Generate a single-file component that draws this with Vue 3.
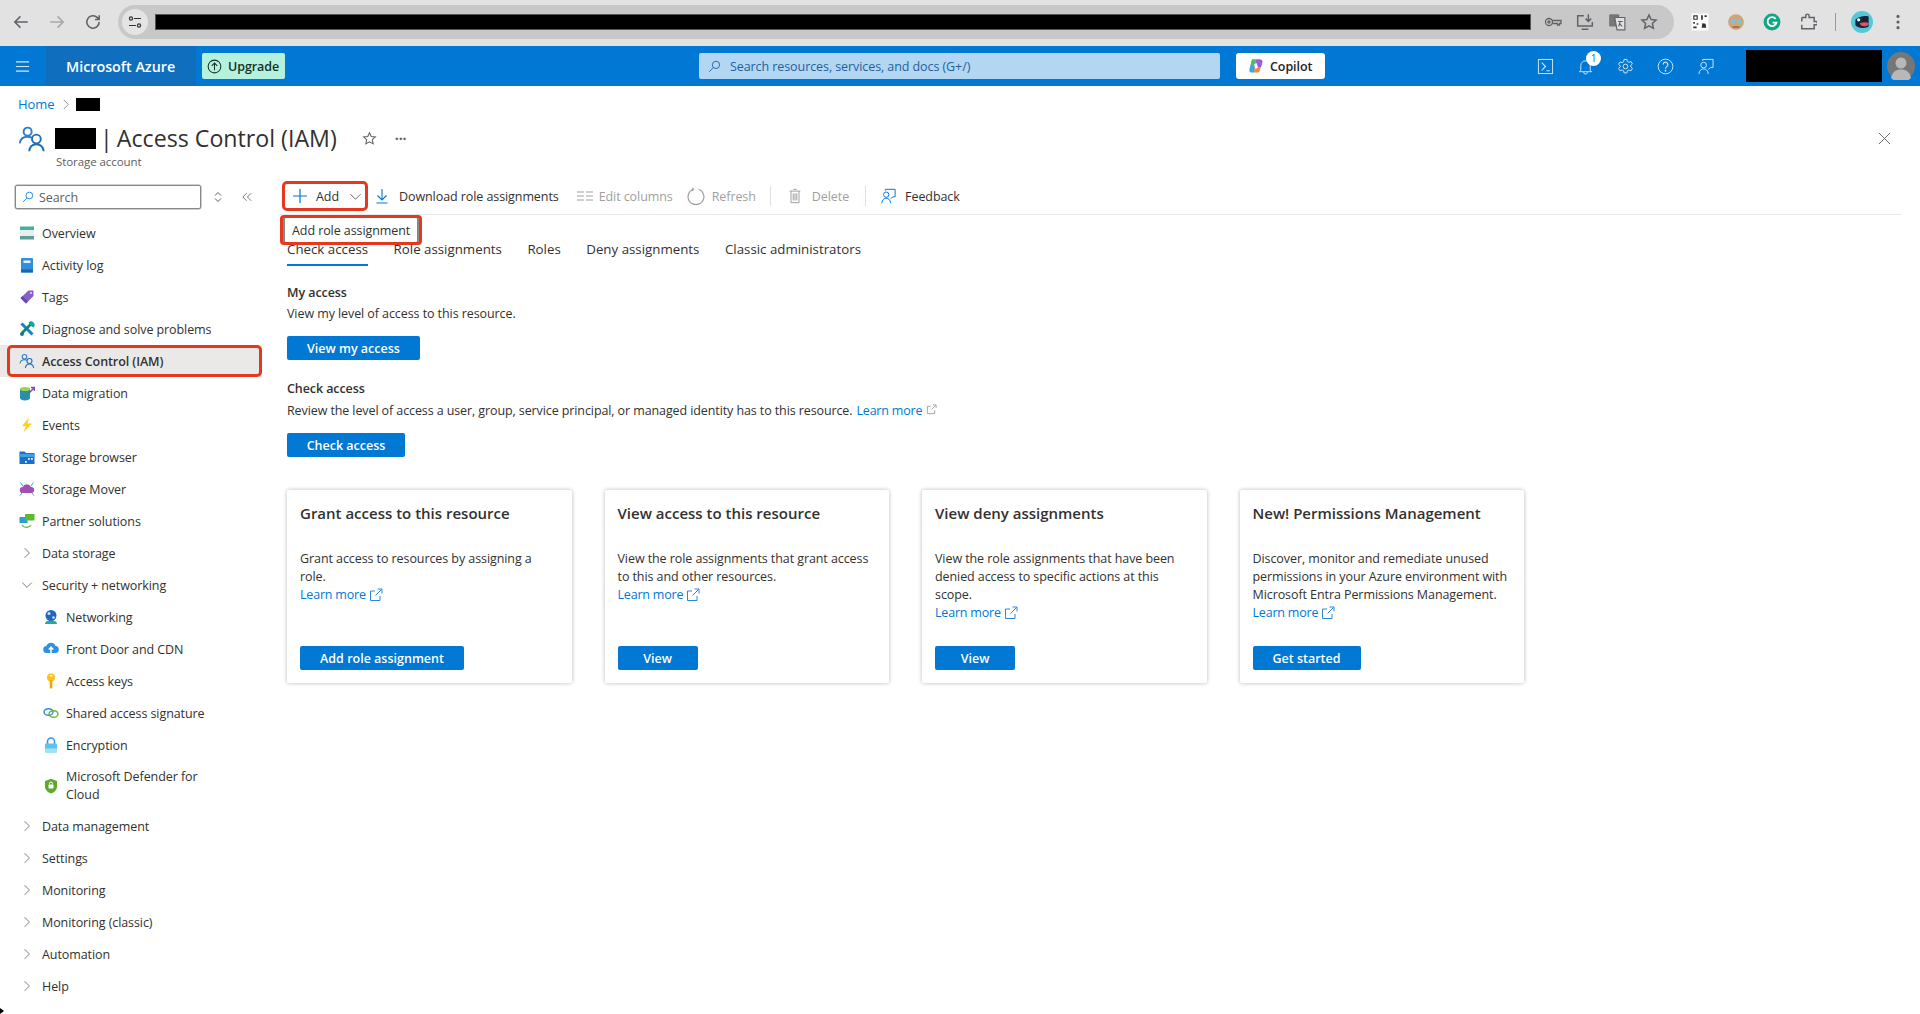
<script setup>
// Colour icons of the resource menu, all drawn on a 16x16 box
const icons = {
  overview: '<rect x="1" y="1.5" width="14" height="3.5" fill="#3fb29a"/><rect x="1" y="5" width="14" height="6" fill="#e6eeee"/><rect x="1" y="11" width="14" height="3.5" fill="#5e9e98"/>',
  log: '<rect x="2" y="1" width="12" height="14.5" rx="1" fill="#2f8fe0"/><rect x="2" y="12.5" width="12" height="3" fill="#1b66ad"/><rect x="4.5" y="3.5" width="7" height="2.5" fill="#e8f3fc"/>',
  tags: '<path d="M9.5 1.5h5v5.500L7 14.500 1.500 9z" fill="#8661c5"/><path d="M7 14.500 1.500 9l2-2L9 12.500z" fill="#6b45ad"/><circle cx="12" cy="4" r="1" fill="#e6dcf5"/>',
  diagnose: '<path d="M2.500 2.500 13.500 13.500" stroke="#1583c7" stroke-width="3"/><path d="M13 2 3 12" stroke="#0f7f7f" stroke-width="2.600"/><path d="M9.500 1.500a3.500 3.500 0 0 1 5 5L12 5z" fill="#12a5a5"/><circle cx="3" cy="13" r="2" fill="#0f7f7f"/>',
  iam: '<g fill="none" stroke="#2f7fc9" stroke-width="1.100"><circle cx="5.500" cy="3.800" r="2.300"/><path d="M1 10.500c.3-2.400 1.800-3.800 4.500-3.800 1 0 1.700.2 2.400.6"/></g><g fill="none" stroke="#1f6fb8" stroke-width="1.100"><circle cx="10.500" cy="8" r="2.500"/><path d="M6.400 15c.3-2.500 1.800-4 4.100-4s3.800 1.500 4.200 4"/></g>',
  migrate: '<path d="M1 4h10v9c0 1.500-2.200 2.500-5 2.500S1 14.500 1 13z" fill="#2a8fa8"/><ellipse cx="6" cy="4" rx="5" ry="2" fill="#9bd44a"/><path d="M10 8 15 3M12 2.500h3.500V6" stroke="#7a4fb5" stroke-width="1.500" fill="none"/>',
  events: '<path d="M10 .5 3 9h4l-2.500 6.500L13 6.500H8.500z" fill="#fcd116"/>',
  browser: '<path d="M.5 2.500h5l1.500 1.500h8.500v11H.500z" fill="#1a6fc9"/><rect x=".5" y="5" width="15" height="3" fill="#3fa0ea"/><g fill="#e8f3fc"><rect x="9" y="9" width="1.800" height="1.800"/><rect x="12" y="9" width="1.800" height="1.800"/><rect x="6" y="12" width="1.800" height="1.800"/></g>',
  mover: '<path d="M4 12a3 3 0 0 1-.3-6A4.500 4.500 0 0 1 12 6a3 3 0 0 1 .3 6z" fill="#a14fb5"/><path d="M1.500 1.500 4 5M14.500 1.500 12 5M3 12l-2 2.500M13 12l2 2.500" stroke="#27b0c9" stroke-width="1"/>',
  partner: '<rect x=".5" y="4" width="8" height="6" fill="#2aa0d8"/><rect x="6" y="1" width="9.500" height="6.500" fill="#5fb832"/><path d="M3 12a5.500 5.500 0 0 0 9 0" stroke="#5fb832" stroke-width="1.200" fill="none"/>',
  network: '<path d="M2 15c0-2.500 2.500-3.500 6-3.500s6 1 6 3.500z" fill="#1fae9b"/><circle cx="8" cy="6.500" r="5.500" fill="#2166c0"/><circle cx="6" cy="4.500" r="1.500" fill="#cfe3f7"/><circle cx="10.500" cy="8.500" r="1.300" fill="#cfe3f7"/>',
  frontdoor: '<path d="M4 12a3.500 3.500 0 0 1-.5-7A4.800 4.800 0 0 1 12.500 5 3.500 3.500 0 0 1 12 12z" fill="#2f8fe0"/><path d="M8 15V6.500M5.800 8.500 8 6.200l2.200 2.300" stroke="#fff" stroke-width="1.500" fill="none"/>',
  key: '<circle cx="8" cy="4.500" r="4" fill="#fcc419"/><rect x="6.700" y="7" width="2.600" height="8.500" rx="1" fill="#f0a808"/><rect x="6.800" y="2" width="2.400" height="1.500" fill="#fff3c4"/>',
  sas: '<ellipse cx="5.500" cy="7" rx="4.500" ry="3.300" fill="none" stroke="#2f8fe0" stroke-width="1.400"/><ellipse cx="10.500" cy="9" rx="4.500" ry="3.300" fill="none" stroke="#6cb33f" stroke-width="1.400"/>',
  encrypt: '<path d="M4.500 7V4.500a3.500 3.500 0 0 1 7 0V7" fill="none" stroke="#2f9be8" stroke-width="1.600"/><rect x="2" y="6.500" width="12" height="9" rx="1" fill="#5cc3ee"/><rect x="2" y="11.500" width="12" height="4" fill="#9be3f5"/>',
  defender: '<path d="M8 .8 14 3v5.500c0 3.500-2.800 5.800-6 7-3.200-1.200-6-3.500-6-7V3z" fill="#5ea82e"/><rect x="5.500" y="6.500" width="5" height="4" rx=".8" fill="#fff"/><path d="M6.500 6.500V5.500a1.500 1.500 0 0 1 3 0v1" stroke="#fff" fill="none"/>'
}

const menu = [
  { label: 'Overview', icon: 'overview' },
  { label: 'Activity log', icon: 'log' },
  { label: 'Tags', icon: 'tags' },
  { label: 'Diagnose and solve problems', icon: 'diagnose' },
  { label: 'Access Control (IAM)', icon: 'iam', selected: true },
  { label: 'Data migration', icon: 'migrate' },
  { label: 'Events', icon: 'events' },
  { label: 'Storage browser', icon: 'browser' },
  { label: 'Storage Mover', icon: 'mover' },
  { label: 'Partner solutions', icon: 'partner' },
  { label: 'Data storage', group: 'closed' },
  { label: 'Security + networking', group: 'open' },
  { label: 'Networking', icon: 'network', sub: true },
  { label: 'Front Door and CDN', icon: 'frontdoor', sub: true },
  { label: 'Access keys', icon: 'key', sub: true },
  { label: 'Shared access signature', icon: 'sas', sub: true },
  { label: 'Encryption', icon: 'encrypt', sub: true },
  { label: 'Microsoft Defender for Cloud', icon: 'defender', sub: true, tall: true },
  { label: 'Data management', group: 'closed' },
  { label: 'Settings', group: 'closed' },
  { label: 'Monitoring', group: 'closed' },
  { label: 'Monitoring (classic)', group: 'closed' },
  { label: 'Automation', group: 'closed' },
  { label: 'Help', group: 'closed' }
]

const tabs = ['Check access', 'Role assignments', 'Roles', 'Deny assignments', 'Classic administrators']

const cards = [
  { title: 'Grant access to this resource', text: 'Grant access to resources by assigning a role.', action: 'Add role assignment', cls: 'btn-add' },
  { title: 'View access to this resource', text: 'View the role assignments that grant access to this and other resources.', action: 'View', cls: 'btn-view' },
  { title: 'View deny assignments', text: 'View the role assignments that have been denied access to specific actions at this scope.', action: 'View', cls: 'btn-view' },
  { title: 'New! Permissions Management', text: 'Discover, monitor and remediate unused permissions in your Azure environment with Microsoft Entra Permissions Management.', action: 'Get started', cls: 'btn-start' }
]
</script>

<template>
  <div class="page">
    <!-- Browser chrome -->
    <div class="chrome">
      <div class="nav-btns">
        <svg class="ci" viewBox="0 0 16 16" fill="none" stroke="#5f6368" stroke-width="1.400"><path d="M14 8H2.500M7.500 3 2.500 8l5 5"/></svg>
        <svg class="ci" viewBox="0 0 16 16" fill="none" stroke="#a8a8a8" stroke-width="1.400"><path d="M2 8h11.500M8.500 3l5 5-5 5"/></svg>
        <svg class="ci" viewBox="0 0 16 16" fill="none" stroke="#5f6368" stroke-width="1.400"><path d="M13.500 8a5.500 5.500 0 1 1-1.600-3.900L13.500 5.700M13.500 2v3.700H9.800"/></svg>
      </div>
      <div class="url-pill">
        <span class="tune">
          <svg viewBox="0 0 16 16" fill="none" stroke="#333" stroke-width="1.200"><circle cx="4" cy="4.500" r="1.600"/><path d="M7 4.500h7M2 11.500h7"/><circle cx="12" cy="11.500" r="1.600"/></svg>
        </span>
        <span class="url-mask"></span>
        <div class="url-icons">
          <svg class="ci" viewBox="0 0 18 16" fill="none" stroke="#5f6368" stroke-width="1.300"><circle cx="5" cy="8" r="3.500"/><circle cx="5" cy="8" r="1"/><path d="M8.500 6.500h8.500v3h-1.500v1.500h-2V9.500h-5"/></svg>
          <svg class="ci" viewBox="0 0 16 16" fill="none" stroke="#5f6368" stroke-width="1.300"><path d="M7 2.500H1.500v9h13V8M5 14.500h6M11 1v6.500M8.500 5 11 7.500 13.500 5"/></svg>
          <svg class="ci" viewBox="0 0 16 16"><rect x="1" y="1" width="9" height="11" rx="1" fill="#777"/><path d="M6 4h9v11H8z" fill="#e0e0e0" stroke="#5f6368"/><path d="M9 7.500h4M11 7l-1.500 5M10 9l2.500 3" stroke="#5f6368" fill="none"/></svg>
          <svg class="ci" viewBox="0 0 16 16" fill="none" stroke="#5f6368" stroke-width="1.300"><path d="m8 1.800 1.900 4 4.400.5-3.300 3 .9 4.400L8 11.500l-3.900 2.200.9-4.400-3.300-3 4.400-.5z"/></svg>
        </div>
      </div>
      <div class="ext-icons">
        <svg class="ci" viewBox="0 0 16 16"><rect width="15" height="15" x=".5" y=".5" fill="#fff"/><path d="M2 2h4v4H2zM3 3v2h2V3zM9 2h1.500v4H9zM12 2h2v1.500h-2zM2 8h1.500v1.500H2zM5 9h1.500v1.500H5zM2 12h3v1.500H2zM10 9l3 .5.500 3.500h-4z" fill="#333" fill-rule="evenodd"/></svg>
        <svg class="ci" viewBox="0 0 16 16"><circle cx="8" cy="8" r="7" fill="#d0a47c"/><circle cx="5.300" cy="7.500" r="2.200" fill="#7fc4c9"/><circle cx="10.700" cy="7.500" r="2.200" fill="#7fc4c9"/><path d="M5 12.500h6" stroke="#8a5a35"/></svg>
        <svg class="ci" viewBox="0 0 16 16"><circle cx="8" cy="8" r="7.500" fill="#11a683"/><path d="M11.300 5.200a4 4 0 1 0 .7 3.300H8.500" fill="none" stroke="#fff" stroke-width="1.600"/></svg>
        <svg class="ci" viewBox="0 0 16 16" fill="none" stroke="#5f6368" stroke-width="1.300"><path d="M2.500 4H6V2.500a1.500 1.500 0 0 1 3 0V4h4.500v3.500H15a1.500 1.500 0 0 1 0 3h-1.500V14h-11v-3.500M2.500 7.500V4"/></svg>
        <span class="ext-sep"></span>
        <svg class="ci ext-me" viewBox="0 0 20 20"><circle cx="10" cy="10" r="10" fill="#53c8d8"/><path d="M4 8c3-3 8-4 12-3v9c-4 2-9 2-12-1z" fill="#16213a"/><path d="M8 11c3-1 6-1 8 0 0 2-1 3-4 3-2 0-4-1-4-3z" fill="#e8505b"/><circle cx="7" cy="8" r="1.500" fill="#fff"/></svg>
        <svg class="ci ext-dots" viewBox="0 0 16 16" fill="#5f6368"><circle cx="8" cy="3" r="1.400"/><circle cx="8" cy="8" r="1.400"/><circle cx="8" cy="13" r="1.400"/></svg>
      </div>
    </div>

    <!-- Azure top bar -->
    <header class="topbar">
      <div class="burger">
        <svg viewBox="0 0 16 16" stroke="#d5e8f8" stroke-width="1.300"><path d="M1 3h14M1 8h14M1 13h14"/></svg>
      </div>
      <div class="brand">Microsoft Azure</div>
      <div class="upgrade">
        <svg viewBox="0 0 16 16" fill="none" stroke="#12302a" stroke-width="1.100"><circle cx="8" cy="8" r="6.800"/><path d="M8 12V4.500M5 7.300 8 4.300l3 3"/></svg>
        <span>Upgrade</span>
      </div>
      <div class="global-search">
        <svg viewBox="0 0 16 16" fill="none" stroke="#1f5f9f" stroke-width="1.100"><circle cx="9.800" cy="6" r="4.500"/><path d="M6.500 9.300 1.500 14.500"/></svg>
        <span>Search resources, services, and docs (G+/)</span>
      </div>
      <div class="copilot">
        <svg viewBox="0 0 16 16">
          <path d="M4 1.500h5L6 14.500H3.500C1.500 14.500 1 13 1.500 11z" fill="#3aa6e8"/>
          <path d="M4 1.500h5L7.500 8 2.500 8z" fill="#4fb96f"/>
          <path d="M7.500 1.500H12c2 0 2.800 1.500 2.200 3.500l-2.500 8c-.4 1-1.200 1.500-2.200 1.500H6z" fill="#f28a3c"/>
          <path d="M8.200 1.500H12c2 0 2.800 1.500 2.200 3.500L13 9H8z" fill="#9c5ce0"/>
          <path d="M6 6.500 8.500 5 10 9.500 7.500 11z" fill="#fff"/>
        </svg>
        <span>Copilot</span>
      </div>
      <div class="top-icons">
        <span class="top-icon">
          <svg viewBox="0 0 18 18" fill="none" stroke="#d5e8f8" stroke-width="1"><rect x="1.500" y="1.500" width="15" height="15"/><path d="m5 5 4 4-4 4M10 13.500h3.500" stroke-width="1.200"/></svg>
        </span>
        <span class="top-icon bell">
          <svg viewBox="0 0 18 18" fill="none" stroke="#d5e8f8" stroke-width="1"><path d="M4 13V8a5 5 0 0 1 10 0v5l1.500 1.500h-13zM7 15a2 2 0 0 0 4 0"/></svg>
          <i class="badge">1</i>
        </span>
        <span class="top-icon">
          <svg viewBox="0 0 18 18" fill="none" stroke="#d5e8f8" stroke-width="1"><circle cx="9" cy="9" r="2.500"/><path d="M7.500 1.500h3l.5 2.300 1.600.8 2.200-.9 1.500 2.600-1.700 1.500v1.700l1.700 1.500-1.500 2.600-2.200-.9-1.600.8-.5 2.300h-3L7 13.500l-1.600-.8-2.200.9-1.500-2.600 1.700-1.500V8.200L1.700 6.700l1.500-2.600 2.200.9L7 4.100z"/></svg>
        </span>
        <span class="top-icon">
          <svg viewBox="0 0 18 18" fill="none" stroke="#d5e8f8" stroke-width="1"><circle cx="9" cy="9" r="7.800"/><path d="M6.500 7a2.500 2.500 0 1 1 3.800 2.100C9.300 9.800 9 10.300 9 11.500" stroke-width="1.200"/><circle cx="9" cy="13.500" r=".6" fill="#d5e8f8"/></svg>
        </span>
        <span class="top-icon">
          <svg viewBox="0 0 18 18" fill="none" stroke="#d5e8f8" stroke-width="1"><circle cx="7" cy="7.500" r="3"/><path d="M2 17c.4-3.500 2.300-5.500 5-5.500s4.600 2 5 5.500M6 3V1.500h11V10h-2.500l-2.500 2"/></svg>
        </span>
      </div>
      <div class="account-mask"></div>
      <div class="avatar">
        <svg viewBox="0 0 28 28"><circle cx="14" cy="14" r="14" fill="#767676"/><circle cx="14" cy="11" r="5.500" fill="#b8b8b8"/><path d="M4 26c1-6 5-8.500 10-8.500S23 20 24 26a14 14 0 0 1-20 0z" fill="#b8b8b8"/></svg>
      </div>
    </header>

    <!-- Breadcrumb and blade title -->
    <div class="crumbs">
      <a class="home">Home</a>
      <svg viewBox="0 0 8 12" fill="none" stroke="#8a8886"><path d="M1.500 1 6.500 6l-5 5"/></svg>
      <span class="crumb-mask"></span>
    </div>
    <div class="blade-head">
      <svg class="blade-icon" viewBox="0 0 16 16" v-html="icons.iam"></svg>
      <div class="blade-titles">
        <div class="blade-title">
          <span class="title-mask"></span>
          <h1><span class="pipe">|</span>Access Control (IAM)</h1>
          <svg class="star" viewBox="0 0 16 16" fill="none" stroke="#605e5c" stroke-width="1.100"><path d="m8 1.800 1.900 4 4.400.5-3.300 3 .9 4.400L8 11.500l-3.900 2.200.9-4.400-3.300-3 4.400-.5z"/></svg>
          <span class="more">···</span>
        </div>
        <div class="blade-sub">Storage account</div>
      </div>
      <svg class="close" viewBox="0 0 14 14" stroke="#605e5c" stroke-width="1"><path d="m1 1 12 12M13 1 1 13"/></svg>
    </div>

    <div class="body">
      <!-- Resource menu -->
      <aside class="side">
        <div class="side-tools">
          <div class="side-search">
            <svg viewBox="0 0 16 16" fill="none" stroke="#0078d4" stroke-width="1.100"><circle cx="9.800" cy="6" r="4.500"/><path d="M6.500 9.300 1.500 14.500"/></svg>
            <span>Search</span>
          </div>
          <svg class="updown" viewBox="0 0 10 14" fill="none" stroke="#605e5c"><path d="M2 5.500 5 2.500l3 3M2 8.500l3 3 3-3"/></svg>
          <svg class="collapse" viewBox="0 0 14 12" fill="none" stroke="#605e5c"><path d="M6.500 1.500 2 6l4.500 4.500M12 1.500 7.500 6l4.500 4.500"/></svg>
        </div>
        <nav>
          <div
            v-for="item in menu"
            :key="item.label"
            class="nav-item"
            :class="{ selected: item.selected, sub: item.sub, tall: item.tall }"
          >
            <svg v-if="item.group === 'closed'" class="nav-chev" viewBox="0 0 16 16" fill="none" stroke="#605e5c"><path d="m5 2 6 6-6 6"/></svg>
            <svg v-else-if="item.group === 'open'" class="nav-chev" viewBox="0 0 16 16" fill="none" stroke="#605e5c"><path d="m2 5 6 6 6-6"/></svg>
            <svg v-else class="nav-icon" viewBox="0 0 16 16" v-html="icons[item.icon]"></svg>
            <span>{{ item.label }}</span>
          </div>
        </nav>
      </aside>

      <!-- IAM blade content -->
      <main class="main">
        <div class="toolbar">
          <div class="tool add-tool">
            <svg class="tool-plus" viewBox="0 0 16 16" stroke="#0078d4" stroke-width="1.200"><path d="M8 1v14M1 8h14"/></svg>
            <span>Add</span>
            <svg class="tool-chev" viewBox="0 0 14 14" fill="none" stroke="#605e5c"><path d="m1.500 4.500 5.500 5.500 5.500-5.500"/></svg>
          </div>
          <div class="tool t-download">
            <svg viewBox="0 0 16 16" fill="none" stroke="#0078d4" stroke-width="1.100"><path d="M8 1v10.500M3.500 7.500 8 12l4.500-4.500M2.500 15h11"/></svg>
            <span>Download role assignments</span>
          </div>
          <div class="tool off t-columns">
            <svg viewBox="0 0 18 16" fill="none" stroke="#a19f9d"><path d="M1 4h7M1 8h7M1 12h7M10 4h7M10 8h7M10 12h7"/></svg>
            <span>Edit columns</span>
          </div>
          <div class="tool off t-refresh">
            <svg viewBox="0 0 18 18" fill="none" stroke="#a19f9d" stroke-width="1.100"><path d="M6 2.200a7.500 7.500 0 1 0 5 0M5 .8 6.200 2.500 4.300 3.700"/></svg>
            <span>Refresh</span>
          </div>
          <i class="tool-sep sep-first"></i>
          <div class="tool off t-delete">
            <svg viewBox="0 0 16 18" fill="none" stroke="#a19f9d" stroke-width="1.100"><path d="M2 3.500h12M3.500 3.500V16.500h9V3.500M6 1.500h4M6 6v8M8 6v8M10 6v8"/></svg>
            <span>Delete</span>
          </div>
          <i class="tool-sep"></i>
          <div class="tool t-feedback">
            <svg viewBox="0 0 18 18" fill="none" stroke="#0078d4" stroke-width="1.100"><circle cx="7" cy="7.500" r="3"/><path d="M2 17c.4-3.500 2.300-5.500 5-5.500s4.600 2 5 5.500M6 3V1.500h11V10h-2.500l-2.500 2"/></svg>
            <span>Feedback</span>
          </div>
        </div>

        <div class="add-menu">Add role assignment</div>

        <div class="tabs">
          <div v-for="(tab, i) in tabs" :key="tab" class="tab" :class="{ active: i === 0 }">{{ tab }}</div>
        </div>

        <section class="access">
          <h2>My access</h2>
          <p>View my level of access to this resource.</p>
          <button class="primary btn-my">View my access</button>

          <h2 class="second">Check access</h2>
          <p class="second-text">
            Review the level of access a user, group, service principal, or managed identity has to this resource.
            <a class="link">Learn more</a>
            <svg class="ext-small" viewBox="0 0 12 12" fill="none" stroke="#a19f9d"><path d="M5 2.500H1.500v8h8V7M6 6l4.500-4.500M7.500 1h3.500v3.500"/></svg>
          </p>
          <button class="primary btn-check">Check access</button>
        </section>

        <section class="cards">
          <article v-for="card in cards" :key="card.title" class="card">
            <h3>{{ card.title }}</h3>
            <p>
              {{ card.text }}<br />
              <a class="link">Learn more</a>
              <svg class="ext-link" viewBox="0 0 14 14" fill="none" stroke="#2b88d8"><path d="M6 3H1.500v9.500H11V8M6.500 7.500 12.500 1.500M8.500 1H13v4.500"/></svg>
            </p>
            <button class="primary" :class="card.cls">{{ card.action }}</button>
          </article>
        </section>
      </main>
    </div>

    <!-- Tip of the mouse pointer at the bottom left -->
    <i class="pointer"></i>
  </div>
</template>

<style>
html, body {
  margin: 0;
  background: #fff;
  overflow: hidden;
}
</style>

<style scoped>
.page {
  position: relative;
  width: 1920px;
  height: 1014px;
  overflow: hidden;
  font-family: "Open Sans", "Noto Sans", sans-serif;
  font-size: 12.5px;
  letter-spacing: -.08px;
  color: #323130;
}

.pointer {
  position: absolute;
  left: 0;
  bottom: 0;
  border-left: 4px solid #000;
  border-top: 3px solid transparent;
  border-bottom: 3px solid transparent;
}

svg {
  display: block;
  flex: none;
}

/* Browser chrome */
.chrome {
  display: flex;
  align-items: center;
  height: 46px;
  padding: 0 0 2px 8px;
  box-sizing: border-box;
  background: #e2e2e2;
}

.nav-btns {
  display: flex;
  gap: 18px;
  padding: 0 4px;
  width: 102px;
  box-sizing: border-box;
}

.ci {
  width: 18px;
  height: 18px;
}

.url-pill {
  display: flex;
  align-items: center;
  width: 1556px;
  height: 34px;
  margin-left: 8px;
  border-radius: 17px;
  background: #c8c8c8;
}

.tune {
  display: flex;
  align-items: center;
  justify-content: center;
  width: 26px;
  height: 26px;
  margin-left: 4px;
  border-radius: 50%;
  background: #e4e4e4;
}

.tune svg {
  width: 16px;
  height: 16px;
}

.url-mask {
  width: 1376px;
  height: 16px;
  margin-left: 7px;
  background: #000;
  border: 1px solid #555;
  box-sizing: border-box;
}

.url-icons {
  display: flex;
  gap: 14px;
  margin-left: 13px;
}

.ext-icons {
  display: flex;
  align-items: center;
  gap: 18px;
  margin-left: 17px;
}

.ext-sep {
  width: 1px;
  height: 18px;
  margin: 0 -2px 0 0;
  background: #9a9a9a;
}

.ext-me {
  width: 22px;
  height: 22px;
  margin-left: -1px;
}

.ext-dots {
  margin-left: -2px;
}

/* Azure top bar */
.topbar {
  display: flex;
  align-items: center;
  height: 40px;
  background: #0078d4;
  color: #fff;
}

.burger {
  display: flex;
  justify-content: center;
  width: 46px;
  padding-right: 2px;
  box-sizing: border-box;
}

.burger svg {
  width: 15px;
  height: 15px;
}

.brand {
  display: flex;
  align-items: center;
  width: 150px;
  height: 40px;
  padding-left: 20px;
  box-sizing: border-box;
  background: #106ebe;
  font-size: 14.300px;
  font-weight: 600;
  letter-spacing: 0;
}

.upgrade {
  display: flex;
  align-items: center;
  gap: 6px;
  width: 83px;
  height: 26px;
  margin-left: 6px;
  padding-left: 5px;
  box-sizing: border-box;
  border-radius: 2px;
  background: #b5f2dd;
  color: #12302a;
  font-weight: 600;
}

.upgrade svg {
  width: 15px;
  height: 15px;
}

.global-search {
  display: flex;
  align-items: center;
  gap: 9px;
  width: 521px;
  height: 26px;
  margin-left: 414px;
  padding-left: 9px;
  box-sizing: border-box;
  border-radius: 2px;
  background: #b3d6f2;
  color: #1f5f9f;
}

.global-search svg {
  width: 13px;
  height: 13px;
}

.copilot {
  display: flex;
  align-items: center;
  gap: 6px;
  width: 89px;
  height: 26px;
  margin-left: 16px;
  padding-left: 12px;
  box-sizing: border-box;
  border-radius: 3px;
  background: #fff;
  color: #242424;
  font-weight: 600;
}

.copilot svg {
  width: 16px;
  height: 16px;
}

.top-icons {
  display: flex;
  margin-left: 200px;
}

.top-icon {
  display: flex;
  align-items: center;
  justify-content: center;
  position: relative;
  width: 40px;
  height: 40px;
}

.top-icon svg {
  width: 17px;
  height: 17px;
}

.badge {
  position: absolute;
  top: 5px;
  left: 21px;
  width: 15px;
  height: 15px;
  border-radius: 50%;
  background: #fff;
  color: #0078d4;
  font-size: 10px;
  font-style: normal;
  line-height: 15px;
  text-align: center;
}

.account-mask {
  width: 136px;
  height: 32px;
  margin-left: 21px;
  background: #000;
}

.avatar {
  width: 28px;
  height: 28px;
  margin-left: 5px;
}

/* Breadcrumb and blade title */
.crumbs {
  display: flex;
  align-items: center;
  gap: 8px;
  height: 20px;
  margin-top: 8px;
  padding-left: 18px;
  font-size: 13px;
}

.crumbs svg {
  width: 8px;
  height: 11px;
}

.home {
  color: #0078d4;
}

.link {
  color: #0078d4;
  letter-spacing: -.2px;
}

.crumb-mask {
  width: 24px;
  height: 13px;
  margin-left: -2px;
  background: #000;
}

.blade-head {
  display: flex;
  margin-top: 8px;
  padding: 0 29px 0 18px;
}

.blade-icon {
  width: 28px;
  height: 28px;
  margin-top: 3px;
}

.blade-titles {
  flex: 1;
  margin-left: 9px;
}

.blade-title {
  display: flex;
  align-items: center;
  height: 32px;
}

.title-mask {
  width: 41px;
  height: 21px;
  background: #000;
}

h1 {
  margin: 0 0 0 4px;
  font-size: 23.200px;
  font-weight: 400;
  letter-spacing: 0;
}

.pipe {
  margin-right: 4px;
}

.star {
  width: 15px;
  height: 15px;
  margin-left: 25px;
}

.more {
  margin-left: 18px;
  color: #605e5c;
  font-size: 14px;
  font-weight: 700;
}

.blade-sub {
  height: 16px;
  margin-left: 1px;
  color: #605e5c;
  font-size: 11.500px;
  line-height: 16px;
}

.close {
  width: 13px;
  height: 13px;
  margin-top: 10px;
}

.body {
  display: flex;
  margin-top: 6px;
}

/* Resource menu */
.side {
  width: 280px;
  flex: none;
}

.side-tools {
  display: flex;
  align-items: center;
  padding: 9px 0 8px 15px;
}

.side-search {
  display: flex;
  align-items: center;
  gap: 5px;
  width: 186px;
  height: 24px;
  padding-left: 6px;
  box-sizing: border-box;
  border: 1px solid #8a8886;
  border-radius: 2px;
  box-shadow: 0 0 0 .5px #a19f9d;
  color: #605e5c;
}

.side-search svg {
  width: 12px;
  height: 12px;
}

.updown {
  width: 10px;
  height: 14px;
  margin-left: 12px;
}

.collapse {
  width: 12px;
  height: 10px;
  margin-left: 18px;
}

.nav-item {
  display: flex;
  align-items: center;
  gap: 7px;
  position: relative;
  width: 262px;
  height: 32px;
  padding-left: 19px;
  box-sizing: border-box;
}

.nav-item.sub {
  padding-left: 43px;
}

.nav-item.tall {
  height: 49px;
}

.nav-item.tall span {
  width: 150px;
  line-height: 17.500px;
}

.nav-item.selected {
  background: #ebe9e8;
  font-weight: 600;
}

/* Red annotation drawn over the selected row */
.nav-item.selected::after {
  content: "";
  position: absolute;
  inset: 0 0 0 7px;
  border: 3px solid #e5391f;
  border-radius: 5px;
}

.nav-icon {
  width: 16px;
  height: 16px;
}

.nav-chev {
  width: 16px;
  height: 16px;
  transform: scale(.8);
}

/* IAM blade content */
.main {
  position: relative;
  flex: 1;
  padding-top: 5px;
}

.toolbar {
  display: flex;
  align-items: center;
  width: 1620px;
  height: 30px;
  padding: 0 0 3px 2px;
  border-bottom: 1.500px solid #e8e8e8;
}

.tool {
  display: flex;
  align-items: center;
  gap: 9px;
  height: 30px;
}

.tool svg {
  width: 16px;
  height: 16px;
}

.off {
  color: #a19f9d;
}

.add-tool {
  gap: 8px;
  width: 86px;
  padding-left: 7px;
  box-sizing: border-box;
  border: 3px solid #e5391f;
  border-radius: 5px;
}

.add-tool .tool-chev {
  width: 13px;
  height: 13px;
  margin-left: 2px;
}

.t-download { margin-left: 6px; }
.t-columns { margin-left: 17px; gap: 5px; }
.t-refresh { margin-left: 14px; gap: 6px; }
.t-delete { margin-left: 16px; }
.t-feedback { margin-left: 14px; }

.t-columns svg { width: 18px; }
.t-refresh svg { width: 19px; height: 19px; }

.tool-sep {
  width: 1px;
  height: 20px;
  margin-left: 16px;
  background: #e1dfdd;
}

.tool-sep.sep-first {
  margin-left: 14px;
}

/* Dropdown under Add, red annotation is its border */
.add-menu {
  position: absolute;
  top: 39px;
  left: 0;
  width: 142px;
  height: 30px;
  padding-left: 9px;
  box-sizing: border-box;
  border: 3px solid #e5391f;
  border-radius: 4px;
  background: #fff;
  box-shadow: inset 2px 0 0 #8a8886, inset -2px 0 0 #8a8886;
  line-height: 26px;
}

.tabs {
  display: flex;
  gap: 25.500px;
  padding: 24px 0 0 7px;
  font-size: 13.300px;
  letter-spacing: 0;
}

.tab {
  height: 25px;
  line-height: 20px;
}

.tab.active {
  border-bottom: 2px solid #0078d4;
}

.access {
  padding-left: 7px;
}

h2 {
  margin: 17px 0 0;
  font-size: 12.500px;
  font-weight: 600;
  line-height: 20px;
}

h2.second {
  margin-top: 19px;
}

.access p {
  margin: 1px 0 0;
  line-height: 20px;
}

.access p.second-text {
  display: flex;
  align-items: center;
  gap: 4px;
  margin-top: 2px;
  letter-spacing: -.1px;
}

.ext-small {
  width: 11px;
  height: 11px;
  margin: -3px 0 0 0;
}

.primary {
  display: block;
  height: 24px;
  padding: 0;
  border: 0;
  border-radius: 2px;
  background: #0078d4;
  color: #fff;
  font: 600 12.500px "Open Sans", "Noto Sans", sans-serif;
}

.btn-my {
  width: 133px;
  margin-top: 12px;
}

.btn-check {
  width: 118px;
  margin-top: 12px;
}

.cards {
  display: flex;
  gap: 33px;
  margin-top: 33px;
  padding-left: 7px;
}

.card {
  display: flex;
  flex-direction: column;
  width: 284.500px;
  height: 193px;
  padding: 12px 13px 13px;
  box-sizing: border-box;
  box-shadow: 0 0 4px rgba(0, 0, 0, .28);
  border-radius: 2px;
}

h3 {
  margin: 0;
  font-size: 15px;
  font-weight: 600;
  line-height: 22px;
  letter-spacing: 0;
}

.card p {
  margin: 26px 0 0;
  line-height: 18px;
}

.ext-link {
  display: inline-block;
  width: 14px;
  height: 14px;
  margin-left: 3px;
  vertical-align: -3px;
}

.card .primary {
  margin-top: auto;
}

.btn-add { width: 164px; }
.btn-view { width: 80px; }
.btn-start { width: 108px; }
</style>
